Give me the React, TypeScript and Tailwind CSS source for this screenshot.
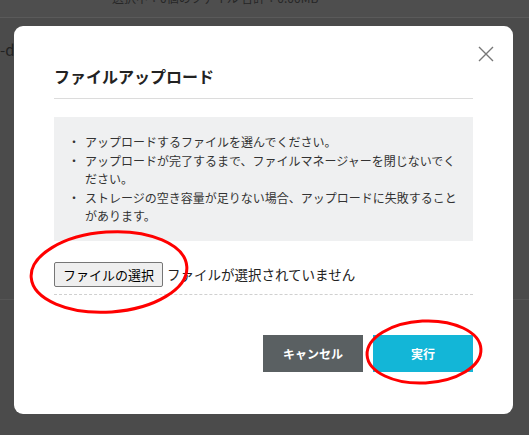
import React from 'react';

const jp = { fontFamily: '"Noto Sans CJK JP", "Noto Sans", sans-serif' };

const notes = [
  'アップロードするファイルを選んでください。',
  'アップロードが完了するまで、ファイルマネージャーを閉じないでください。',
  'ストレージの空き容量が足りない場合、アップロードに失敗することがあります。',
];

function CloseIcon() {
  return (
    <svg width="16" height="16" viewBox="0 0 16 16" fill="none">
      <path d="M1 1L15 15M15 1L1 15" stroke="#777" strokeWidth="1.4" />
    </svg>
  );
}

function UploadModal() {
  return (
    <div className="absolute left-[14px] top-[26px] w-[499px] rounded-[9px] bg-white px-[40px] pt-[38px] pb-[42px]">
      <button className="absolute right-[19px] top-[20px]">
        <CloseIcon />
      </button>

      <h2 className="border-b border-[#dcdcdc] pb-[10px] text-[16px] leading-[24px] font-bold text-[#222]">
        ファイルアップロード
      </h2>

      <div className="mt-[18px] bg-[#eff0f1] pl-[14px] pr-[12px] pt-[16px] pb-[16px]">
        <ul className="flex flex-col gap-[1px] text-[12px] leading-[18px] text-[#333]">
          {notes.map((n) => (
            <li key={n} className="flex">
              <span className="w-[17px] shrink-0">・</span>
              <span>{n}</span>
            </li>
          ))}
        </ul>
      </div>

      <div className="mt-[21px] flex items-center border-b border-dashed border-[#d0d0d0] pb-[7px]">
        <button className="h-[25px] rounded-[2px] border border-[#767676] bg-[#efefef] px-[8px] text-[13px] text-black">
          ファイルの選択
        </button>
        <span className="ml-[4px] text-[13.5px] text-[#222]">ファイルが選択されていません</span>
      </div>

      <div className="mt-[40px] flex justify-end gap-[10px]">
        <button className="h-[37px] w-[100px] bg-[#5a6062] text-[12px] font-bold text-white">キャンセル</button>
        <button className="h-[37px] w-[100px] bg-[#13b6d7] text-[12px] font-bold text-white">実行</button>
      </div>
    </div>
  );
}

export default function App() {
  return (
    <div className="relative h-[435px] w-[529px] overflow-hidden bg-[#4b4b4b]" style={jp}>
      {/* page behind the overlay */}
      <div className="h-[30px] border-b border-[#5a5a5a] bg-[#4e4e4e]">
        <div className="-mt-[12px] pl-[112px] text-[12px] leading-[20px] text-[#262626]">
          選択中：0個のファイル 合計：0.00MB
        </div>
      </div>
      <div className="h-[282px] border-b border-[#555]">
        <div className="pt-[22px] text-[15px] leading-[20px] text-[#222]">-d</div>
      </div>

      <UploadModal />

      {/* red marker circles */}
      <svg className="pointer-events-none absolute left-0 top-0" width="529" height="435">
        <ellipse cx="109" cy="272" rx="78" ry="40" fill="none" stroke="#f00" strokeWidth="3" transform="rotate(-4 109 272)" />
        <ellipse cx="424" cy="352" rx="57" ry="31" fill="none" stroke="#f00" strokeWidth="3" transform="rotate(-3 424 352)" />
      </svg>
    </div>
  );
}
